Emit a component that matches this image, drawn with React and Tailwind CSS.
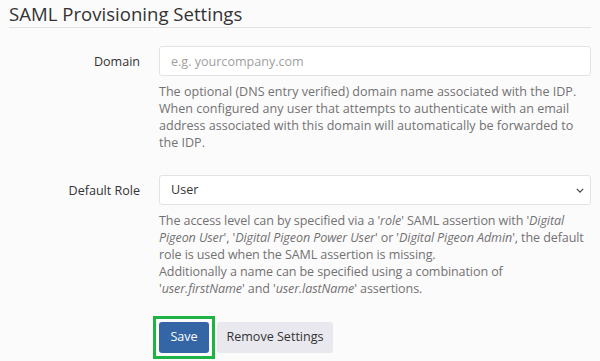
const font = { fontFamily: "'Open Sans', 'Noto Sans', sans-serif" };

export default function App() {
  return (
    <div
      className="min-h-[361px] bg-[#fcfbfc] px-[9px] text-[12.55px] text-[#333]"
      style={font}
    >
      {/* Header */}
      <h2 className="h-[28px] border-b border-[#e2e2e2] pt-[3px] text-[18.6px] leading-[22px] text-[#333]">
        SAML Provisioning Settings
      </h2>

      <div className="mt-[18px] grid grid-cols-[131px_1fr] gap-x-[19px]">
        {/* Domain */}
        <label className="flex h-[30px] items-center justify-end pt-[2px]">Domain</label>
        <div>
          <input
            type="text"
            placeholder="e.g. yourcompany.com"
            className="h-[30px] w-full rounded-[3px] border border-[#e3e3e3] bg-white px-[11px] text-[12.55px] placeholder:text-[#a0a0a0] outline-none"
          />
          <p className="mt-[7px] leading-[17px] text-[#727272]">
            The optional (DNS entry verified) domain name associated with the IDP.
            When configured any user that attempts to authenticate with an email
            address associated with this domain will automatically be forwarded to
            the IDP.
          </p>
        </div>

        {/* Default Role */}
        <label className="mt-[24px] flex h-[30px] items-center justify-end pt-[2px]">
          Default Role
        </label>
        <div className="mt-[24px]">
          <div className="relative">
            <select className="h-[30px] w-full appearance-none rounded-[3px] border border-[#e3e3e3] bg-white px-[11px] text-[12.55px] text-[#333] outline-none">
              <option>User</option>
              <option>Power User</option>
              <option>Admin</option>
            </select>
            <svg
              viewBox="0 0 10 6"
              className="pointer-events-none absolute right-[7px] top-[13px] h-[5px] w-[8px]"
            >
              <path d="M1 1l4 4 4-4" fill="none" stroke="#444" strokeWidth="1.5" />
            </svg>
          </div>
          <p className="mt-[7px] leading-[17px] tracking-[-0.1px] text-[#727272]">
            The access level can by specified via a '<i>role</i>' SAML assertion
            with '<i>Digital Pigeon User</i>', '<i>Digital Pigeon Power User</i>' or
            '<i>Digital Pigeon Admin</i>', the default role is used when the SAML
            assertion is missing.
            <br />
            Additionally a name can be specified using a combination of
            '<i>user.firstName</i>' and '<i>user.lastName</i>' assertions.
          </p>
        </div>

        {/* Actions */}
        <div />
        <div className="mt-[25px] flex gap-[8px]">
          <div className="relative">
            <button className="h-[31px] w-[50px] rounded-[3px] bg-[#3466a6] text-[12.55px] text-white">
              Save
            </button>
            <span className="pointer-events-none absolute -inset-[6px] border-[3px] border-[#1db345]" />
          </div>
          <button className="h-[31px] w-[116px] rounded-[3px] bg-[#e9e8ee] text-[12.55px] text-[#333]">
            Remove Settings
          </button>
        </div>
      </div>
    </div>
  );
}
